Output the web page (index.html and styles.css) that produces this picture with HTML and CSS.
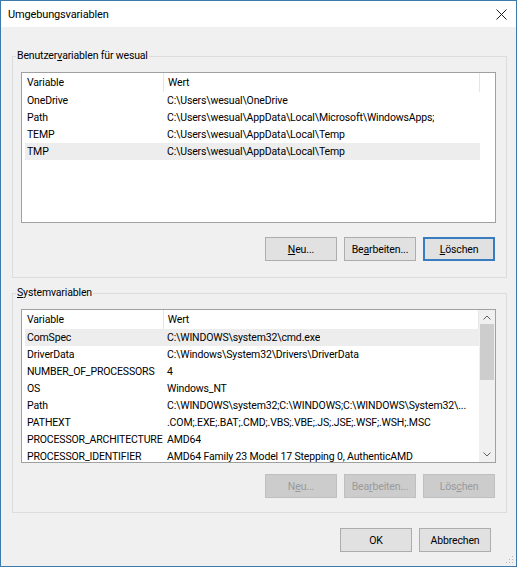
FILE: index.html
```html
<!DOCTYPE html>
<html lang="de">
<head>
    <meta charset="UTF-8">
    <title>Umgebungsvariablen</title>
    <link rel="stylesheet" href="styles.css">
</head>
<body>
    <div class="window">
        <!-- Title bar -->
        <div class="titlebar">
            <span class="title">Umgebungsvariablen</span>
            <svg class="close" width="11" height="11" viewBox="0 0 11 11">
                <path d="M0.5 0.5 L10.5 10.5 M10.5 0.5 L0.5 10.5" stroke="#1a1a1a" stroke-width="1" fill="none"/>
            </svg>
        </div>

        <div class="dialog">
            <!-- User variables -->
            <fieldset class="group group-user">
                <legend>Benutzer<u>v</u>ariablen für wesual</legend>
                <div class="group-body">
                    <div class="listview list-user">
                        <div class="lv-main">
                            <div class="lv-header">
                                <div class="lv-hcol lv-hcol-name">Variable</div>
                                <div class="lv-hcol lv-hcol-value">Wert</div>
                            </div>
                            <div class="lv-row"><span class="lv-name">OneDrive</span><span class="lv-value">C:\Users\wesual\OneDrive</span></div>
                            <div class="lv-row"><span class="lv-name">Path</span><span class="lv-value">C:\Users\wesual\AppData\Local\Microsoft\WindowsApps;</span></div>
                            <div class="lv-row"><span class="lv-name">TEMP</span><span class="lv-value">C:\Users\wesual\AppData\Local\Temp</span></div>
                            <div class="lv-row selected"><span class="lv-name">TMP</span><span class="lv-value">C:\Users\wesual\AppData\Local\Temp</span></div>
                        </div>
                    </div>
                    <div class="buttons">
                        <button class="btn"><u>N</u>eu...</button>
                        <button class="btn">Be<u>a</u>rbeiten...</button>
                        <button class="btn default"><u>L</u>öschen</button>
                    </div>
                </div>
            </fieldset>

            <!-- System variables -->
            <fieldset class="group group-system">
                <legend><u>S</u>ystemvariablen</legend>
                <div class="group-body">
                    <div class="listview list-system">
                        <div class="lv-main">
                            <div class="lv-header">
                                <div class="lv-hcol lv-hcol-name">Variable</div>
                                <div class="lv-hcol lv-hcol-value">Wert</div>
                            </div>
                            <div class="lv-row selected"><span class="lv-name">ComSpec</span><span class="lv-value">C:\WINDOWS\system32\cmd.exe</span></div>
                            <div class="lv-row"><span class="lv-name">DriverData</span><span class="lv-value">C:\Windows\System32\Drivers\DriverData</span></div>
                            <div class="lv-row"><span class="lv-name">NUMBER_OF_PROCESSORS</span><span class="lv-value">4</span></div>
                            <div class="lv-row"><span class="lv-name">OS</span><span class="lv-value">Windows_NT</span></div>
                            <div class="lv-row"><span class="lv-name">Path</span><span class="lv-value">C:\WINDOWS\system32;C:\WINDOWS;C:\WINDOWS\System32\...</span></div>
                            <div class="lv-row"><span class="lv-name">PATHEXT</span><span class="lv-value">.COM;.EXE;.BAT;.CMD;.VBS;.VBE;.JS;.JSE;.WSF;.WSH;.MSC</span></div>
                            <div class="lv-row"><span class="lv-name">PROCESSOR_ARCHITECTURE</span><span class="lv-value">AMD64</span></div>
                            <div class="lv-row"><span class="lv-name">PROCESSOR_IDENTIFIER</span><span class="lv-value">AMD64 Family 23 Model 17 Stepping 0, AuthenticAMD</span></div>
                        </div>
                        <div class="scrollbar">
                            <div class="sb-btn">
                                <svg width="8" height="5" viewBox="0 0 8 5"><polyline points="0.5,4.5 4,1 7.5,4.5" fill="none" stroke="#606060" stroke-width="1"/></svg>
                            </div>
                            <div class="sb-thumb"></div>
                            <div class="sb-track"></div>
                            <div class="sb-btn">
                                <svg width="8" height="5" viewBox="0 0 8 5"><polyline points="0.5,0.5 4,4 7.5,0.5" fill="none" stroke="#606060" stroke-width="1"/></svg>
                            </div>
                        </div>
                    </div>
                    <div class="buttons">
                        <button class="btn" disabled>N<u>e</u>u...</button>
                        <button class="btn" disabled>Bea<u>r</u>beiten...</button>
                        <button class="btn" disabled>Lös<u>c</u>hen</button>
                    </div>
                </div>
            </fieldset>

            <div class="footer">
                <button class="btn">OK</button>
                <button class="btn">Abbrechen</button>
            </div>
        </div>

        <!-- size grip in the lower right corner -->
        <svg class="grip" width="8" height="8" viewBox="0 0 8 8">
            <rect x="6" y="0" width="1" height="1" fill="#b5b5b5"/>
            <rect x="3" y="3" width="1" height="1" fill="#b5b5b5"/>
            <rect x="6" y="3" width="1" height="1" fill="#b5b5b5"/>
            <rect x="0" y="6" width="1" height="1" fill="#b5b5b5"/>
            <rect x="3" y="6" width="1" height="1" fill="#b5b5b5"/>
            <rect x="6" y="6" width="1" height="1" fill="#b5b5b5"/>
        </svg>
    </div>
</body>
</html>
```

FILE: styles.css
```css
body {
    margin: 0;
    font-family: "Segoe UI", Roboto, "Noto Sans", sans-serif;
    font-size: 10.5px;
    letter-spacing: -0.15px;
    color: #000;
    background: #fff;
}

/* Dialog window frame */
.window {
    position: relative;
    width: 517px;
    height: 567px;
    box-sizing: border-box;
    border: 1px solid #3d7aab;
    background: #f0f0f0;
    display: flex;
    flex-direction: column;
}

.titlebar {
    height: 26px;
    background: #fff;
    display: flex;
    align-items: center;
    justify-content: space-between;
    padding-left: 7px;
}

.title {
    font-size: 11px;
}

.close {
    margin-right: 9px;
}

.dialog {
    flex: 1;
    padding: 21px 9px 0 11px;
    display: flex;
    flex-direction: column;
}

/* Group boxes */
.group {
    margin: 0;
    padding: 0;
    min-width: 0;
    border: 1px solid #dcdcdc;
}

.group legend {
    margin-left: 3px;
    padding: 0 1px;
    line-height: 16px;
}

.group-system {
    margin-top: 7px;
}

.group-body {
    padding: 8px 10px 16px 8px;
}

.group-system .group-body {
    padding-bottom: 14px;
}

/* List views */
.listview {
    display: flex;
    background: #fff;
    border: 1px solid #a0a0a0;
    overflow: hidden;
}

.list-user {
    height: 151px;
    box-sizing: border-box;
}

.list-system {
    height: 154px;
    box-sizing: border-box;
}

.lv-main {
    flex: 1;
    overflow: hidden;
}

.lv-header {
    display: flex;
    height: 19px;
    line-height: 19px;
}

.lv-hcol {
    box-sizing: border-box;
    border-right: 1px solid #e5e5e5;
    white-space: nowrap;
}

.lv-hcol-name {
    width: 142px;
    padding-left: 5px;
}

.lv-hcol-value {
    width: 316px;
    padding-left: 4px;
}

.lv-row {
    display: flex;
    width: 455px;
    height: 17px;
    line-height: 17px;
    margin-left: 3px;
    white-space: nowrap;
}

.lv-row.selected {
    background: #ededed;
}

.lv-name {
    width: 138px;
    flex-shrink: 0;
    padding-left: 2px;
    box-sizing: border-box;
    overflow: hidden;
    text-overflow: ellipsis;
}

.lv-value {
    padding-left: 4px;
    overflow: hidden;
}

/* Vertical scrollbar of the system list */
.scrollbar {
    width: 16px;
    background: #f0f0f0;
    display: flex;
    flex-direction: column;
}

.sb-btn {
    height: 14px;
    display: flex;
    align-items: center;
    justify-content: center;
}

.sb-btn:last-child {
    height: 15px;
}

.sb-thumb {
    height: 56px;
    margin: 0 1px;
    background: #cdcdcd;
}

.sb-track {
    flex: 1;
}

/* Push buttons */
.buttons {
    display: flex;
    justify-content: flex-end;
    gap: 7px;
    margin-top: 14px;
    padding-right: 1px;
}

.group-system .buttons {
    margin-top: 11px;
}

.btn {
    width: 72px;
    height: 24px;
    padding: 0;
    font-family: inherit;
    font-size: 10.5px;
    letter-spacing: -0.15px;
    color: #000;
    background: #e1e1e1;
    border: 1px solid #adadad;
}

.btn.default {
    border: 2px solid #3a7cc0;
}

.btn:disabled {
    color: #9a9a9a;
    background: #cccccc;
    border-color: #bfbfbf;
}

.footer {
    display: flex;
    justify-content: flex-end;
    gap: 7px;
    margin-top: 15px;
    padding-right: 16px;
}

.grip {
    position: absolute;
    right: 2px;
    bottom: 2px;
}
```
